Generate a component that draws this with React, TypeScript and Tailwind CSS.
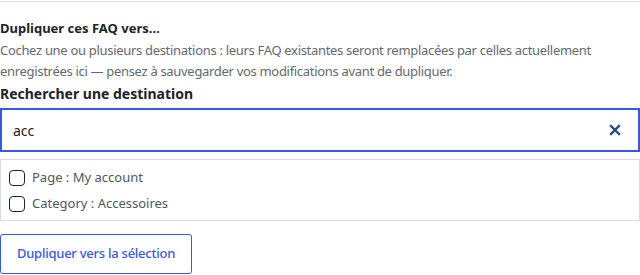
import React from "react";

export default function App() {
  return (
    <div className="w-[640px] h-[275px] bg-white overflow-hidden" style={{ fontFamily: '"Noto Sans", sans-serif' }}>
      <div className="h-[2px] border-t border-[#dcdcde] mt-px" />
      <div className="pt-[15px]">
        <div className="text-[13px] font-bold text-[#1d2327] leading-[20px]">Dupliquer ces FAQ vers…</div>
        <p className="text-[13px] text-[#646970] leading-[21px] mt-[2px] tracking-[-0.31px]">
          Cochez une ou plusieurs destinations : leurs FAQ existantes seront remplacées par celles actuellement enregistrées ici — pensez à sauvegarder vos modifications avant de dupliquer.
        </p>
        <div className="text-[14px] font-bold text-[#1d2327] leading-[22px] mt-px">Rechercher une destination</div>
        <div className="mt-[3px] h-[44px] border-2 border-[#3858e9] flex items-center justify-between pl-[11px] pr-[14px]">
          <span className="text-[14px] text-[#1d2327]">acc</span>
          <svg width="12" height="12" viewBox="0 0 12 12" className="mr-[3px]">
            <path d="M2 2 L10 10 M10 2 L2 10" stroke="#2c4a80" strokeWidth="2.4" strokeLinecap="square" />
          </svg>
        </div>
        <div className="mt-[7px] border border-[#dcdcde] h-[62px] flex flex-col pl-[8px] pt-[9px] gap-[8px]">
          <label className="flex items-center gap-[7px] h-[18px]">
            <span className="w-[16px] h-[16px] border border-[#1d2327] rounded-[4px] bg-white" />
            <span className="text-[13px] text-[#50575e]">Page : My account</span>
          </label>
          <label className="flex items-center gap-[7px] h-[18px]">
            <span className="w-[16px] h-[16px] border border-[#1d2327] rounded-[4px] bg-white" />
            <span className="text-[13px] text-[#50575e]">Category : Accessoires</span>
          </label>
        </div>
        <button className="mt-[13px] w-[192px] h-[40px] border border-[#3858e9] rounded-[3px] text-[#3858e9] text-[13px] font-medium bg-white tracking-[-0.25px]">
          Dupliquer vers la sélection
        </button>
      </div>
    </div>
  );
}
